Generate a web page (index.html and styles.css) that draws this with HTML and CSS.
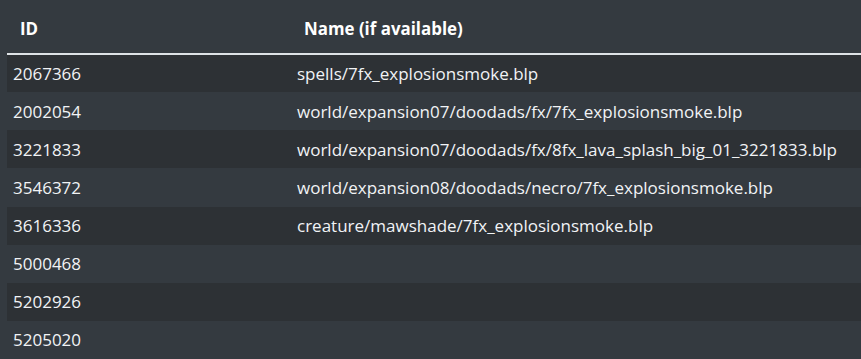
FILE: index.html
```html
<!DOCTYPE html>
<html>
<head>
<meta charset="utf-8">
<link rel="stylesheet" href="styles.css">
</head>
<body>
<div class="wrap">
<table class="files">
<thead>
<tr><th class="col-id">ID</th><th>Name (if available)</th></tr>
</thead>
<tbody>
<tr><td>2067366</td><td>spells/7fx_explosionsmoke.blp</td></tr>
<tr><td>2002054</td><td>world/expansion07/doodads/fx/7fx_explosionsmoke.blp</td></tr>
<tr><td>3221833</td><td>world/expansion07/doodads/fx/8fx_lava_splash_big_01_3221833.blp</td></tr>
<tr><td>3546372</td><td>world/expansion08/doodads/necro/7fx_explosionsmoke.blp</td></tr>
<tr><td>3616336</td><td>creature/mawshade/7fx_explosionsmoke.blp</td></tr>
<tr><td>5000468</td><td></td></tr>
<tr><td>5202926</td><td></td></tr>
<tr><td>5205020</td><td></td></tr>
</tbody>
</table>
</div>
</body>
</html>
```
FILE: styles.css
```css
html, body {
  margin: 0;
  padding: 0;
  background: #343a40;
  overflow: hidden;
}
.wrap {
  padding-left: 7px;
}
.files {
  width: 854px;
  border-collapse: collapse;
  table-layout: fixed;
  font-family: "Segoe UI", "Open Sans", "Noto Sans", sans-serif;
  font-size: 17px;
  color: #f1f3f5;
}
.files th {
  text-align: left;
  font-weight: 700;
  font-size: 16.9px;
  color: #ffffff;
  height: 54px;
  padding: 4px 13px 0;
  box-sizing: border-box;
  line-height: 24px;
  border-bottom: 2px solid #dee2e6;
}
.files th.col-id {
  width: 284px;
}
.files td {
  height: 38.14px;
  padding: 1px 6px 0;
  box-sizing: border-box;
  line-height: 24px;
  white-space: nowrap;
}
.files tbody tr:nth-child(odd) {
  background: #2d3135;
}
```
